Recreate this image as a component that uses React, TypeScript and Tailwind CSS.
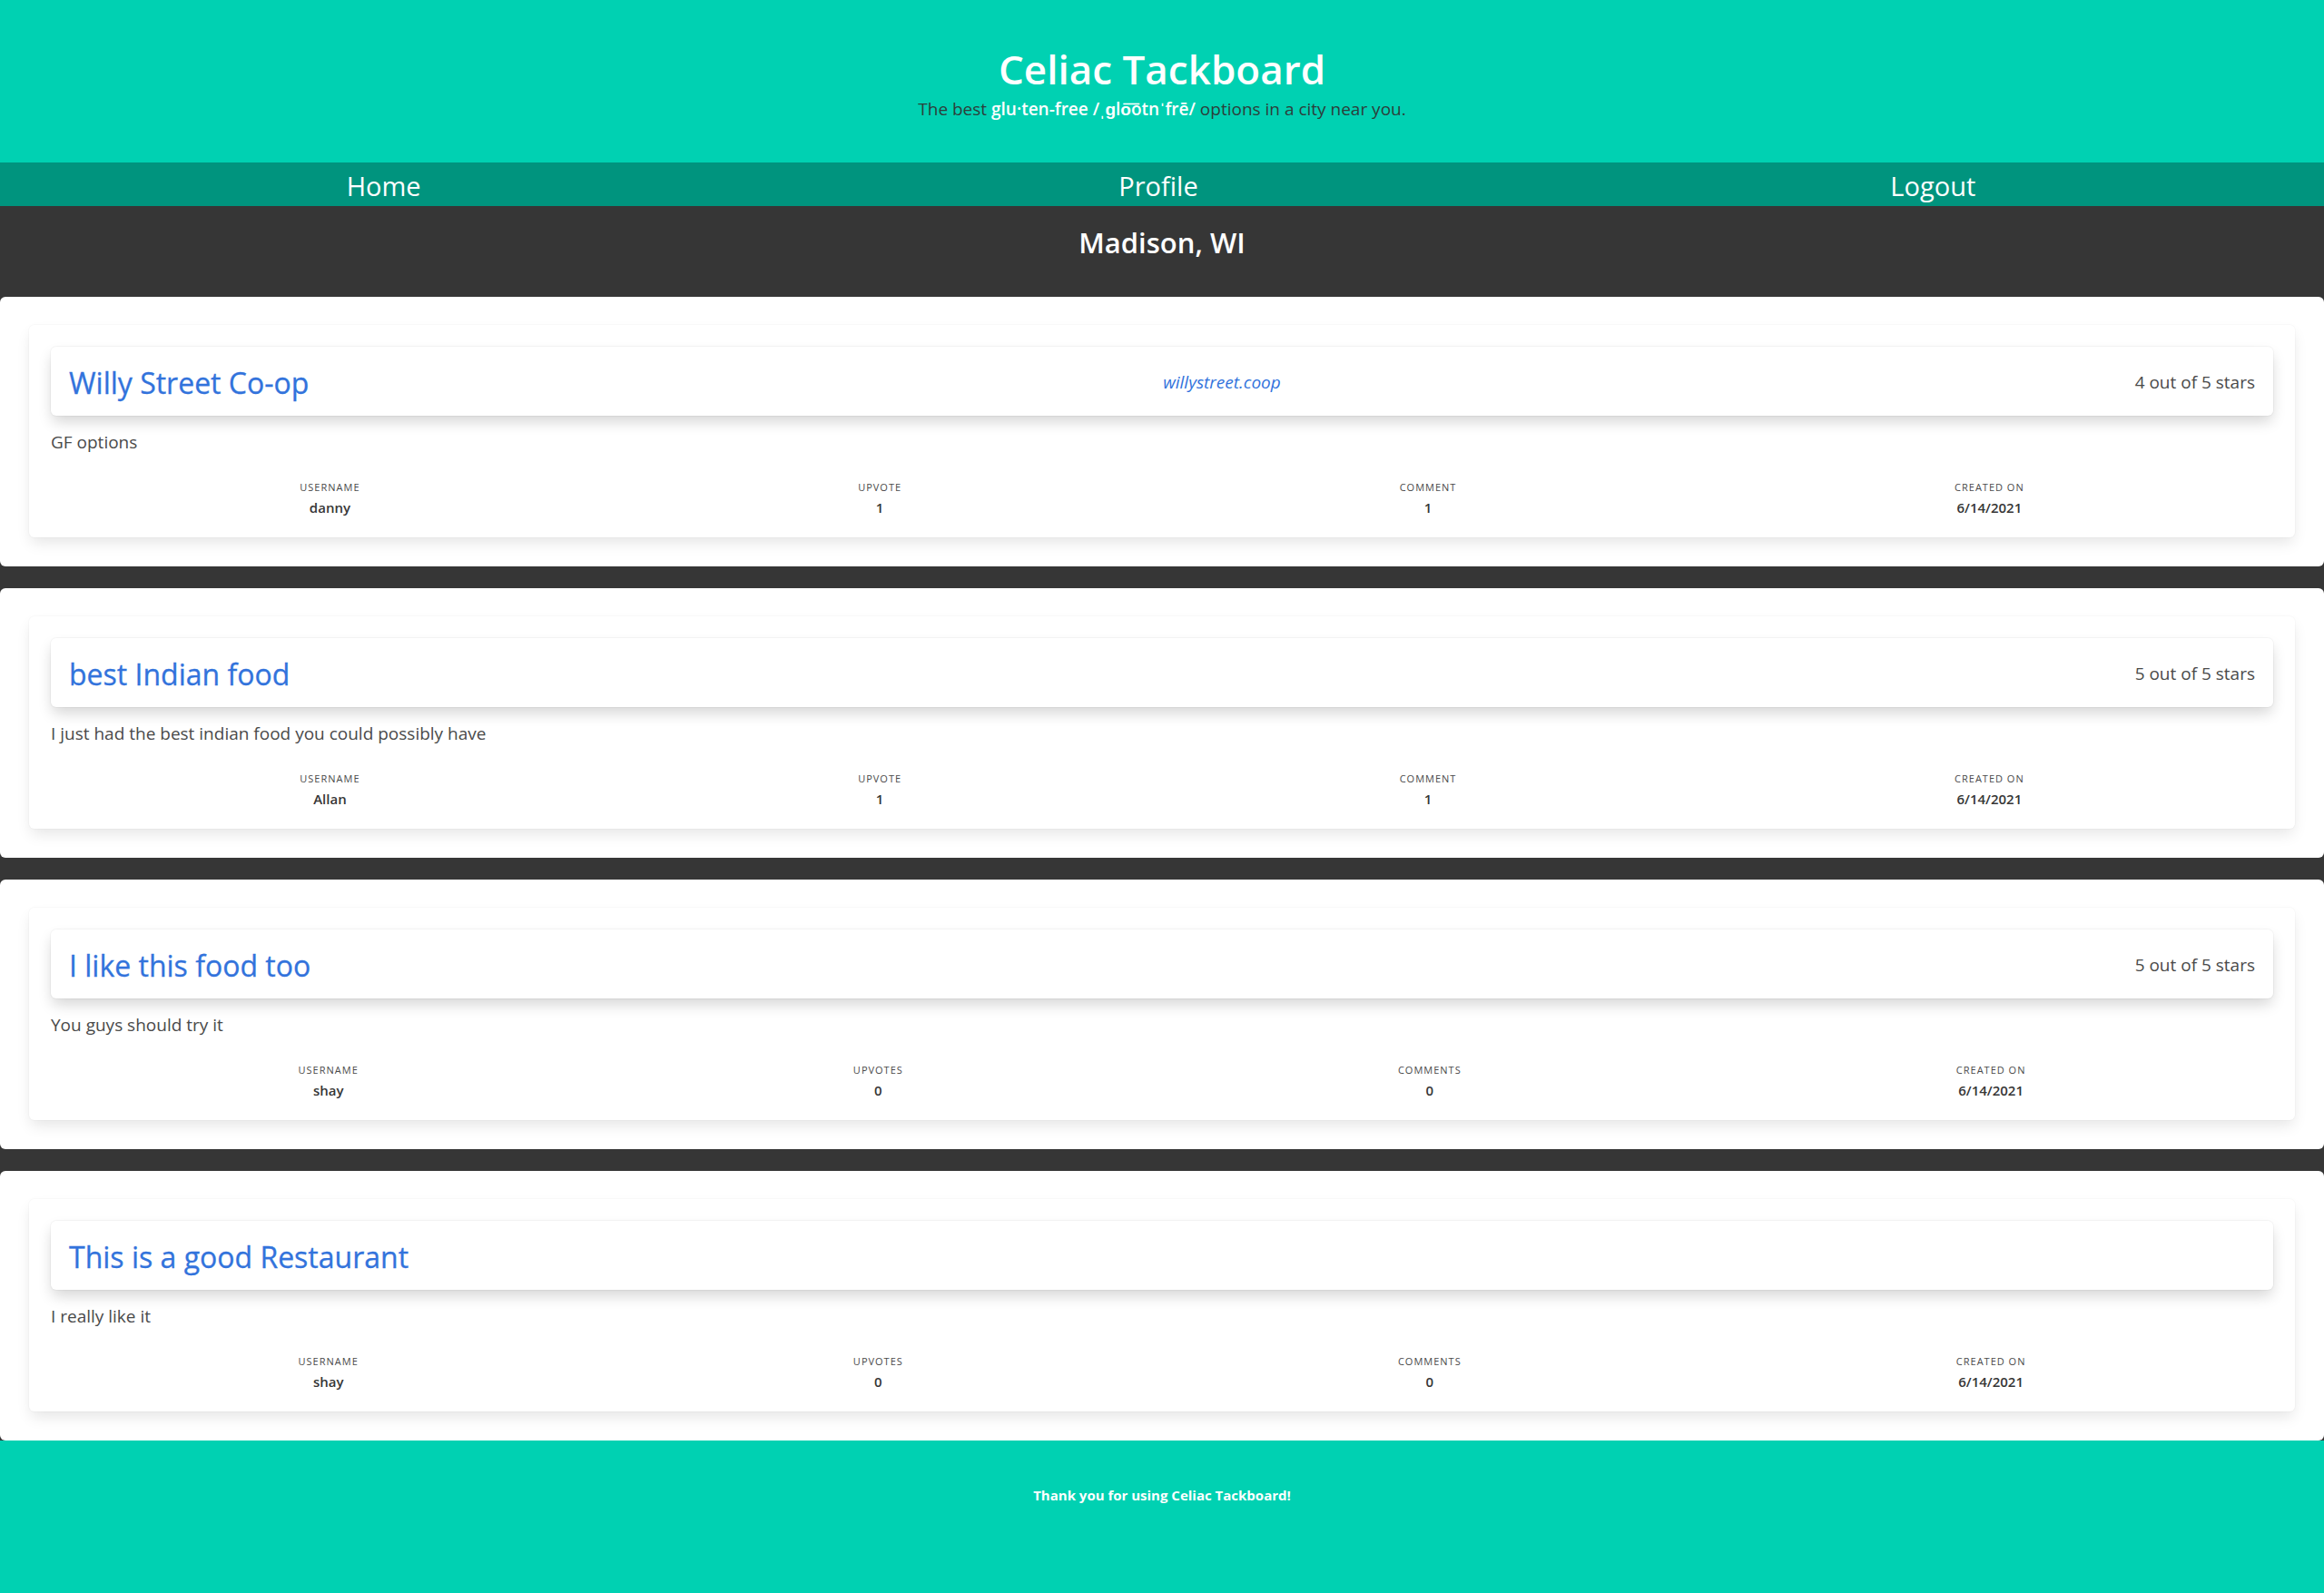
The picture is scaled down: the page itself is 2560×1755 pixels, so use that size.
import React from "react";

type Post = {
  title: string;
  link?: string;
  stars?: string;
  body: string;
  stats: { label: string; value: string }[];
};

const POSTS: Post[] = [
  {
    title: "Willy Street Co-op",
    link: "willystreet.coop",
    stars: "4 out of 5 stars",
    body: "GF options",
    stats: [
      { label: "Username", value: "danny" },
      { label: "Upvote", value: "1" },
      { label: "Comment", value: "1" },
      { label: "Created on", value: "6/14/2021" },
    ],
  },
  {
    title: "best Indian food",
    stars: "5 out of 5 stars",
    body: "I just had the best indian food you could possibly have",
    stats: [
      { label: "Username", value: "Allan" },
      { label: "Upvote", value: "1" },
      { label: "Comment", value: "1" },
      { label: "Created on", value: "6/14/2021" },
    ],
  },
  {
    title: "I like this food too",
    stars: "5 out of 5 stars",
    body: "You guys should try it",
    stats: [
      { label: "Username", value: "shay" },
      { label: "Upvotes", value: "0" },
      { label: "Comments", value: "0" },
      { label: "Created on", value: "6/14/2021" },
    ],
  },
  {
    title: "This is a good Restaurant",
    body: "I really like it",
    stats: [
      { label: "Username", value: "shay" },
      { label: "Upvotes", value: "0" },
      { label: "Comments", value: "0" },
      { label: "Created on", value: "6/14/2021" },
    ],
  },
];

// ---- one post -----------------------------------------------------------
function PostCard({ post }: { post: Post }) {
  return (
    <div className="rounded-md bg-white px-8 pb-8 pt-[31px]">
      <div className="rounded-md bg-white px-6 pb-[21px] pt-6 shadow-[0_8px_16px_-2px_rgba(10,10,10,0.1),0_0_0_1px_rgba(10,10,10,0.02)]">
        <div className="flex h-[76px] items-center justify-between rounded-md bg-white px-5 pt-[3px] shadow-[0_8px_16px_-2px_rgba(10,10,10,0.18),0_0_0_1px_rgba(10,10,10,0.03)]">
          <h2 className="text-[32px] leading-10 text-[#3273dc] [-webkit-text-stroke:0.3px_#3273dc]">
            {post.title}
          </h2>
          {post.link && (
            <a className="text-[19px] italic text-[#3273dc]">{post.link}</a>
          )}
          {post.stars ? (
            <span className="text-[19px] text-[#4a4a4a]">{post.stars}</span>
          ) : (
            <span />
          )}
        </div>
        <p className="mt-[15px] text-[19px] leading-7 text-[#4a4a4a]">{post.body}</p>
        <div className="mt-[28px] flex">
          {post.stats.map((s) => (
            <div key={s.label} className="flex flex-auto shrink-0 flex-col items-center">
              <span className="text-[11px] uppercase leading-4 tracking-[1px] text-[#4a4a4a]">
                {s.label}
              </span>
              <span className="mt-[2px] text-[15px] font-semibold leading-6 text-[#363636]">
                {s.value}
              </span>
            </div>
          ))}
        </div>
      </div>
    </div>
  );
}

export default function App() {
  return (
    <div className="min-h-screen bg-[#363636] font-['Open_Sans',sans-serif]">
      {/* Hero */}
      <header className="flex h-[179px] flex-col items-center bg-[#00d1b2] pt-[48px]">
        <h1 className="text-[44px] font-semibold leading-[56px] text-white">Celiac Tackboard</h1>
        <p className="mt-[4px] text-[19px] leading-6 text-[#2c3e3a]">
          The best <strong className="font-semibold text-white">glu·ten-free /ˌɡlo͞otnˈfrē/</strong>{" "}
          options in a city near you.
        </p>
      </header>

      {/* Nav */}
      <nav className="grid h-[48px] grid-cols-3 items-center bg-[#00947e] pt-[3px] text-center text-[29px] leading-[45px] text-white">
        <a className="pr-2">Home</a>
        <a className="pr-2">Profile</a>
        <a className="pr-2">Logout</a>
      </nav>

      {/* City + posts */}
      <main>
        <div className="h-[100px] pt-[20px] text-center">
          <h2 className="text-[31px] font-semibold leading-10 text-white">Madison, WI</h2>
        </div>
        <div className="flex flex-col gap-6">
          {POSTS.map((p) => (
            <PostCard key={p.title} post={p} />
          ))}
        </div>
      </main>

      <footer className="h-[168px] bg-[#00d1b2] pt-12 text-center">
        <p className="text-[15px] font-bold leading-6 text-white">Thank you for using Celiac Tackboard!</p>
      </footer>
    </div>
  );
}
